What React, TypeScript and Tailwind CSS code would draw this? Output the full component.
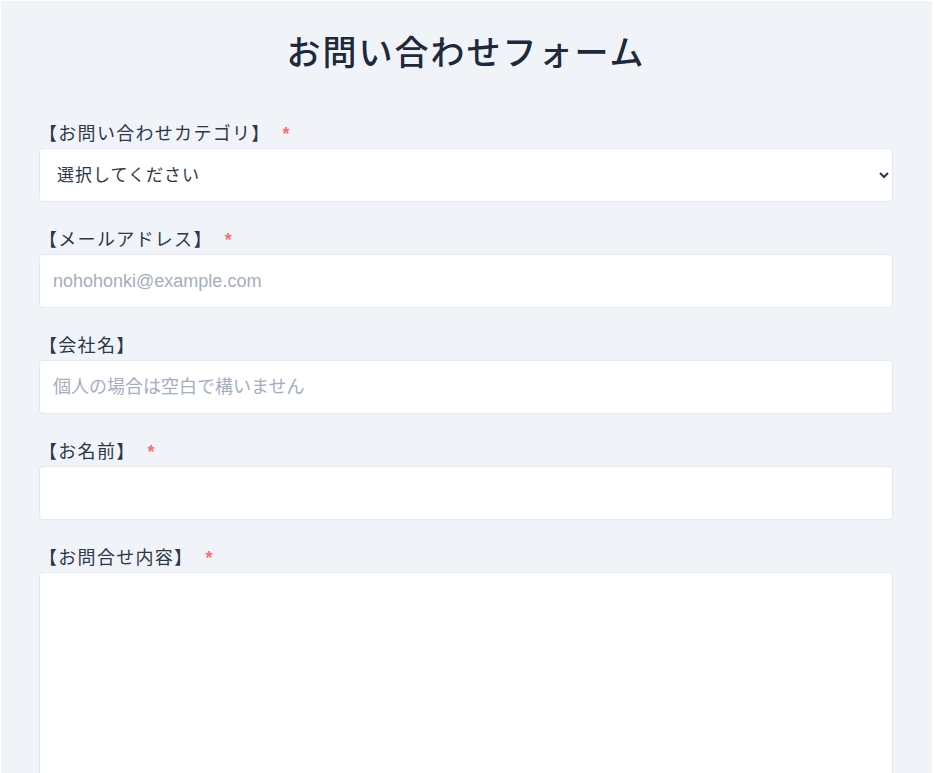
import React from "react";

const jp = { fontFamily: '"Liberation Sans", "Noto Sans CJK JP", sans-serif' };

function Label({ text, required }: { text: string; required?: boolean }) {
  return (
    <div className="flex items-center h-[27px] text-[18px] tracking-[1.3px] text-[#2d3748] leading-[27px]">
      <span>{text}</span>
      {required && <span className="ml-[12px] text-[#f87171] text-[18px] font-bold">*</span>}
    </div>
  );
}

const inputCls =
  "block w-full h-[54px] bg-white border border-[#e2e8f0] rounded-[4px] px-[13px] text-[18px] text-[#2d3748] placeholder:text-[#a3aebf] outline-none";

export default function App() {
  return (
    <div className="bg-white pl-px pt-px pr-[2px] overflow-hidden h-[773px]" style={jp}>
      <div className="bg-[#f0f4f9] h-full pl-[38px] pr-[39px]">
        <h1 className="text-center text-[34px] font-medium tracking-[2px] text-[#1e293b] leading-[48px] pt-[28px]">
          お問い合わせフォーム
        </h1>
        <form className="mt-[44px] flex flex-col gap-[25px]">
          <div>
            <Label text="【お問い合わせカテゴリ】" required />
            <select className="block w-full h-[54px] bg-white border border-[#e2e8f0] rounded-[4px] px-[13px] text-[17px] text-[#2d3748] tracking-[1px] outline-none">
              <option>選択してください</option>
            </select>
          </div>
          <div>
            <Label text="【メールアドレス】" required />
            <input className={inputCls} placeholder="nohohonki@example.com" />
          </div>
          <div>
            <Label text="【会社名】" />
            <input className={inputCls} placeholder="個人の場合は空白で構いません" />
          </div>
          <div>
            <Label text="【お名前】" required />
            <input className={inputCls} />
          </div>
          <div>
            <Label text="【お問合せ内容】" required />
            <textarea className="block w-full h-[260px] bg-white border border-[#e2e8f0] rounded-[4px] px-[13px] py-[10px] text-[17px] outline-none resize-none" />
          </div>
        </form>
      </div>
    </div>
  );
}
